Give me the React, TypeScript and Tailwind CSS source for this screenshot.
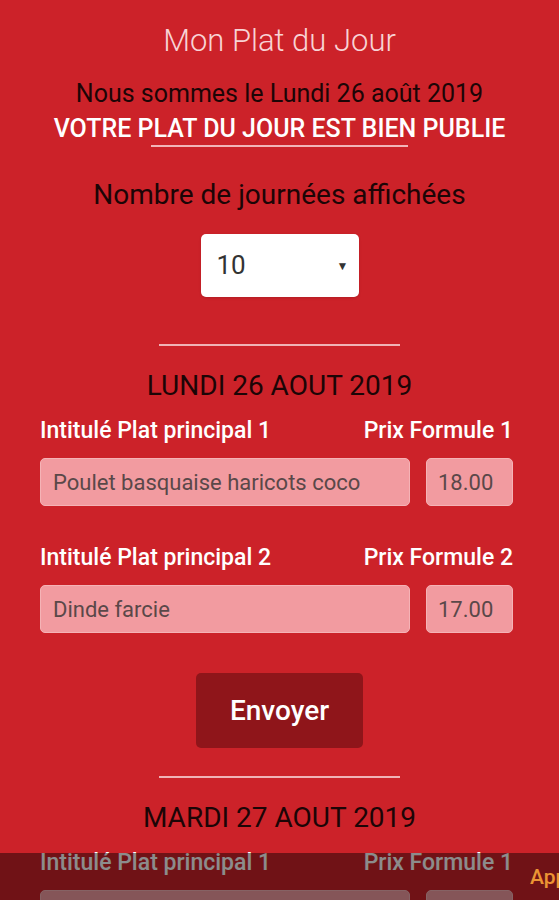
import React from "react";

const days = [
  {
    title: "LUNDI 26 AOUT 2019",
    plats: [
      { label: "Intitulé Plat principal 1", prixLabel: "Prix Formule 1", value: "Poulet basquaise haricots coco", prix: "18.00" },
      { label: "Intitulé Plat principal 2", prixLabel: "Prix Formule 2", value: "Dinde farcie", prix: "17.00" },
    ],
  },
  {
    title: "MARDI 27 AOUT 2019",
    plats: [
      { label: "Intitulé Plat principal 1", prixLabel: "Prix Formule 1", value: "", prix: "" },
      { label: "Intitulé Plat principal 2", prixLabel: "Prix Formule 2", value: "", prix: "" },
    ],
  },
];

function Divider() {
  return <div className="mx-auto h-[2px] w-[241px] bg-[#f0b3b6]" />;
}

function PlatRow({ plat, first }: { plat: (typeof days)[0]["plats"][0]; first: boolean }) {
  return (
    <div className={first ? "" : "mt-[38px]"}>
      <div className="flex items-center justify-between text-[23px] font-medium leading-[28px] text-white">
        <span>{plat.label}</span>
        <span>{plat.prixLabel}</span>
      </div>
      <div className="mt-[13px] flex gap-4">
        <div className="flex h-[48px] flex-1 items-center rounded-[5px] border border-[#f5b3b6] bg-[#f29ba0] px-3 text-[22px] text-[#5a4849]">
          {plat.value}
        </div>
        <div className="flex h-[48px] w-[87px] items-center rounded-[5px] border border-[#f5b3b6] bg-[#f29ba0] px-[11px] text-[22px] text-[#5a4849]">
          {plat.prix}
        </div>
      </div>
    </div>
  );
}

export default function App() {
  return (
    <div
      className="relative h-[900px] w-full overflow-hidden bg-[#cc2229]"
      style={{ fontFamily: "Roboto, 'Noto Sans', sans-serif" }}
    >
      <div className="flex flex-col items-center pt-[23px] text-center">
        <h1 className="text-[31px] font-light leading-[36px] text-[#f8d3d5]">Mon Plat du Jour</h1>
        <p className="mt-[20px] text-[25px] leading-[30px] text-[#1c0506]">Nous sommes le Lundi 26 août 2019</p>
        <p className="mt-[5px] text-[25px] leading-[30px] text-white [font-weight:500]">VOTRE PLAT DU JOUR EST BIEN PUBLIE</p>
        <div className="mt-[1px] h-[2px] w-[257px] bg-[#f2b5b8]" />
        <p className="mt-[31px] text-[28px] leading-[34px] text-[#1c0506]">Nombre de journées affichées</p>
        <div className="mt-[22px] flex h-[63px] w-[158px] items-center justify-between rounded-[5px] bg-white pl-4 pr-[10px] shadow-sm">
          <span className="text-[26px] text-[#333]">10</span>
          <span className="text-[12px] text-[#333]">▼</span>
        </div>
      </div>

      <div className="mt-[47px]">
        <Divider />
      </div>

      {days.map((day, i) => (
        <section key={day.title} className={i === 0 ? "" : "mt-[22px]"}>
          <h2 className="mt-[24px] text-center text-[28px] leading-[32px] text-[#1c0506]">{day.title}</h2>
          <div className="mt-[15px] pl-10 pr-[46px]">
            {day.plats.map((plat, j) => (
              <PlatRow key={j} plat={plat} first={j === 0} />
            ))}
          </div>
          {i === 0 && (
            <>
              <div className="mt-[40px] flex justify-center">
                <button className="h-[75px] w-[167px] rounded-[5px] bg-[#8f151a] text-[28px] font-medium text-white">
                  Envoyer
                </button>
              </div>
              <div className="mt-[28px]">
                <Divider />
              </div>
            </>
          )}
        </section>
      ))}

      <div className="absolute bottom-0 left-0 h-[47px] w-full bg-black/45">
        <span className="absolute left-[530px] top-[9px] whitespace-nowrap text-[21px] font-medium text-[#ec9434]">
          Application enregistrée
        </span>
      </div>
    </div>
  );
}
